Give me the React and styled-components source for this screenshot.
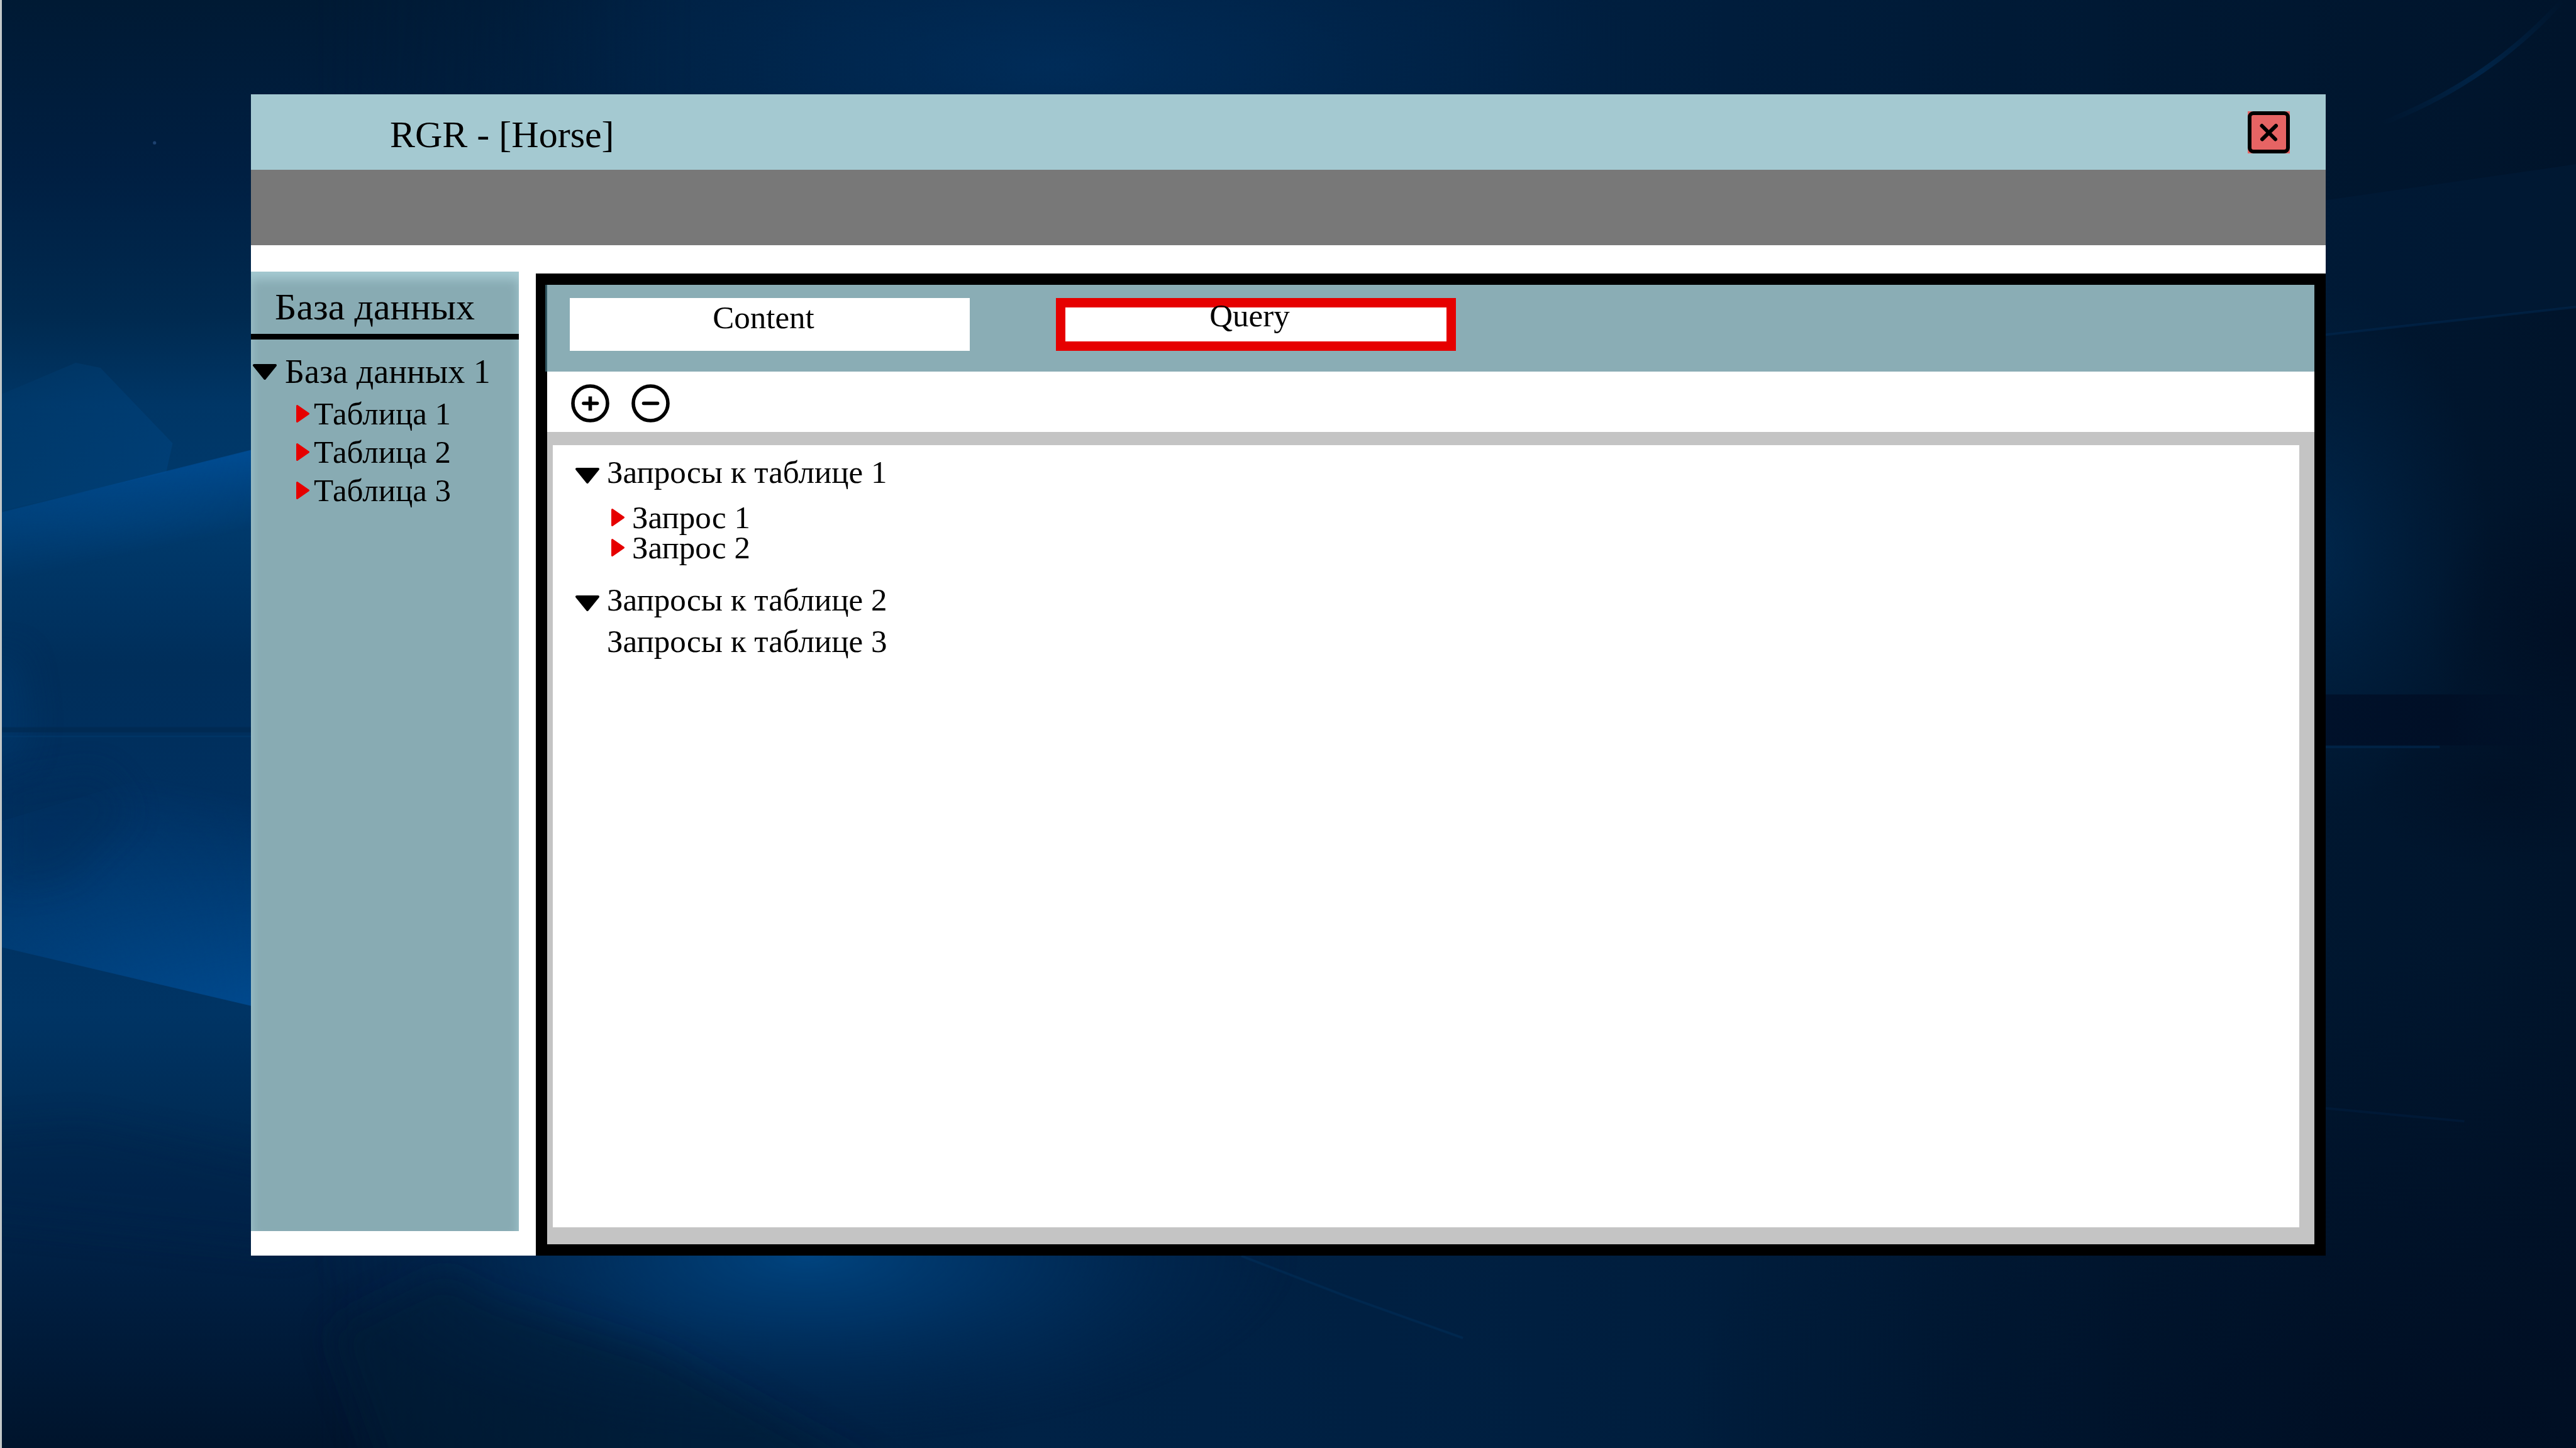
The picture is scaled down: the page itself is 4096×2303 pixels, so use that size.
import React, { useState } from "react";
import styled, { createGlobalStyle } from "styled-components";

const GlobalStyle = createGlobalStyle`
  * { box-sizing: border-box; }
  body { margin: 0; background: #001a35; }
  button { font: inherit; color: inherit; border: 0; padding: 0; background: none; cursor: pointer; }
  ul { list-style: none; margin: 0; padding: 0; }
  h1, h2 { margin: 0; font-weight: 400; }
`;

const Desktop = styled.div`
  position: relative;
  isolation: isolate;
  display: flex;
  flex-direction: column;
  min-height: 100vh;
  padding: 150px 398px 306px 396px;
  border-left: 3px solid #c3c8c9;
  font-family: "Liberation Serif", "Times New Roman", serif;
  color: #000;
`;

const Backdrop = styled.svg`
  position: absolute;
  inset: 0;
  z-index: -1;
  width: 100%;
  height: 100%;
`;

const Window = styled.main`
  flex: 1;
  display: flex;
  flex-direction: column;
  background: #fff;
`;

const TitleBar = styled.header`
  display: flex;
  align-items: center;
  justify-content: space-between;
  height: 120px;
  padding: 0 57px 0 221px;
  background: #a4c9d1;
`;

const WindowTitle = styled.h1`
  padding-top: 8px;
  font-size: 60px;
  line-height: 68px;
`;

const CloseButton = styled.button`
  width: 67px;
  height: 67px;
  background: #e66464;
  svg { display: block; width: 100%; height: 100%; }
`;

const MenuStrip = styled.div`
  height: 120px;
  background: #787878;
`;

const Body = styled.div`
  flex: 1;
  display: flex;
  gap: 27px;
  padding-top: 42px;
`;

const Sidebar = styled.nav`
  width: 426px;
  margin-bottom: 39px;
  background: #88abb3;
  box-shadow: inset 0 12px 16px #a4c9d1;
`;

const SidebarTitle = styled.h2`
  height: 108px;
  padding: 22px 0 0 38px;
  border-bottom: 9px solid #000;
  font-size: 60px;
  line-height: 68px;
`;

const Tree = styled.ul`
  padding: ${(p) => p.$pad};
`;

const Branch = styled.ul`
  padding: ${(p) => p.$pad};
`;

const TreeRow = styled.button`
  display: flex;
  align-items: center;
  gap: ${(p) => p.$gap}px;
  height: ${(p) => p.$height}px;
  font-size: ${(p) => p.$size || 51}px;
  line-height: 48px;
  white-space: nowrap;
`;

const DownMark = styled.svg`
  flex: none;
  width: 38px;
  height: 25px;
  margin-top: ${(p) => (p.$low ? 10 : 0)}px;
  visibility: ${(p) => (p.$hidden ? "hidden" : "visible")};
`;

const RightMark = styled.svg`
  flex: none;
  width: 21px;
  height: 28px;
`;

const Workspace = styled.section`
  flex: 1;
  display: flex;
  flex-direction: column;
  margin-top: 3px;
  border: 18px solid #000;
  background: #c4c4c4;
`;

const TabBar = styled.div`
  display: flex;
  gap: 137px;
  height: 138px;
  padding: 21px 36px 0;
  background: #8aadb5;
  box-shadow: -3px 0 0 #2f5560;
`;

const Tab = styled.button`
  display: flex;
  justify-content: center;
  width: 636px;
  height: 84px;
  padding: ${(p) => (p.$active ? 0 : 3)}px 20px 0 0;
  background: #fff;
  box-shadow: ${(p) => (p.$active ? "inset 0 0 0 15px #e60000" : "none")};
  font-size: 51px;
  line-height: 56px;
`;

const Toolbar = styled.div`
  display: flex;
  align-items: center;
  gap: 35px;
  height: 96px;
  padding: 4px 38px 0;
  background: #fff;
`;

const ToolButton = styled.button`
  width: 61px;
  height: 61px;
  svg { display: block; width: 100%; height: 100%; }
`;

const QueryPane = styled.div`
  flex: 1;
  margin: 21px 24px 27px 9px;
  background: #fff;
`;

function Wallpaper() {
  return (
    <Backdrop viewBox="0 0 1568 882" preserveAspectRatio="none" aria-hidden="true">
      <defs>
        <linearGradient id="base" x1="0" x2="1" y1="0" y2="0">
          <stop offset="0" stopColor="#001c38" />
          <stop offset=".4" stopColor="#002246" />
          <stop offset=".6" stopColor="#001f40" />
          <stop offset=".85" stopColor="#001832" />
          <stop offset="1" stopColor="#00142b" />
        </linearGradient>
        <linearGradient id="leftColumn" x1="0" x2="0" y1="0" y2="1">
          <stop offset="0" stopColor="#001a34" />
          <stop offset=".12" stopColor="#001f42" />
          <stop offset=".22" stopColor="#002a50" />
          <stop offset=".28" stopColor="#003666" />
          <stop offset=".36" stopColor="#003a6c" />
          <stop offset=".46" stopColor="#002e5a" />
          <stop offset=".56" stopColor="#003060" />
          <stop offset=".7" stopColor="#003464" />
          <stop offset=".79" stopColor="#002a52" />
          <stop offset=".88" stopColor="#001f42" />
          <stop offset="1" stopColor="#00142c" />
        </linearGradient>
        <linearGradient id="fadeRight" x1="0" x2="1" y1="0" y2="0">
          <stop offset="0" stopColor="#fff" />
          <stop offset=".45" stopColor="#fff" />
          <stop offset="1" stopColor="#000" />
        </linearGradient>
        <mask id="leftMask">
          <rect width="420" height="882" fill="url(#fadeRight)" />
        </mask>
        <linearGradient id="fan" gradientUnits="userSpaceOnUse" x1="0" y1="0" x2="110" y2="0">
          <stop offset="0" stopColor="#00427a" stopOpacity=".35" />
          <stop offset="1" stopColor="#00498a" stopOpacity=".7" />
        </linearGradient>
        <linearGradient id="beamUp" gradientUnits="userSpaceOnUse" x1="70" y1="292" x2="80" y2="338">
          <stop offset="0" stopColor="#00509a" />
          <stop offset="1" stopColor="#00509a" stopOpacity="0" />
        </linearGradient>
        <linearGradient id="beamLow" gradientUnits="userSpaceOnUse" x1="76" y1="600" x2="100" y2="475">
          <stop offset="0" stopColor="#004c92" />
          <stop offset="1" stopColor="#004c92" stopOpacity="0" />
        </linearGradient>
        <linearGradient id="beamIn" gradientUnits="userSpaceOnUse" x1="0" y1="0" x2="153" y2="0">
          <stop offset="0" stopColor="#777" />
          <stop offset="1" stopColor="#fff" />
        </linearGradient>
        <mask id="beamMask">
          <rect width="200" height="882" fill="url(#beamIn)" />
        </mask>
        <radialGradient id="glowBottom">
          <stop offset="0" stopColor="#00447f" />
          <stop offset=".35" stopColor="#003a70" stopOpacity=".75" />
          <stop offset="1" stopColor="#002a55" stopOpacity="0" />
        </radialGradient>
        <radialGradient id="glowTop">
          <stop offset="0" stopColor="#003060" stopOpacity=".7" />
          <stop offset="1" stopColor="#002a55" stopOpacity="0" />
        </radialGradient>
        <radialGradient id="glowRight">
          <stop offset="0" stopColor="#003260" />
          <stop offset="1" stopColor="#002a50" stopOpacity="0" />
        </radialGradient>
        <radialGradient id="shade">
          <stop offset="0" stopColor="#000c20" />
          <stop offset="1" stopColor="#000c20" stopOpacity="0" />
        </radialGradient>
        <linearGradient id="band" x1="0" x2="1" y1="0" y2="0">
          <stop offset="0" stopColor="#00112a" />
          <stop offset=".5" stopColor="#000f26" />
          <stop offset="1" stopColor="#00112a" stopOpacity="0" />
        </linearGradient>
        <linearGradient id="topRay" gradientUnits="userSpaceOnUse" x1="1450" y1="75" x2="1560" y2="0">
          <stop offset="0" stopColor="#003668" stopOpacity="0" />
          <stop offset=".5" stopColor="#003668" stopOpacity=".45" />
          <stop offset="1" stopColor="#003668" stopOpacity="0" />
        </linearGradient>
        <filter id="soft" filterUnits="userSpaceOnUse" x="-50" y="0" width="700" height="960">
          <feGaussianBlur stdDeviation="10" />
        </filter>
      </defs>
      <rect width="1568" height="882" fill="url(#base)" />
      <rect width="420" height="882" fill="url(#leftColumn)" mask="url(#leftMask)" />

      <ellipse cx="640" cy="40" rx="360" ry="110" fill="url(#glowTop)" />
      <ellipse cx="1405" cy="335" rx="110" ry="160" fill="url(#glowRight)" opacity=".6" />
      <ellipse cx="1568" cy="385" rx="90" ry="90" fill="url(#shade)" opacity=".6" />
      <ellipse cx="1520" cy="480" rx="80" ry="50" fill="url(#shade)" opacity=".45" />
      <ellipse cx="1500" cy="882" rx="480" ry="300" fill="url(#shade)" opacity=".75" />

      <polygon points="0,240 45,221 60,224 104,270 100,288 0,311" fill="url(#fan)" opacity=".55" />
      <g mask="url(#beamMask)">
        <polygon points="0,312 200,262 200,370 0,370" fill="url(#beamUp)" opacity=".85" />
        <polygon points="0,577 200,624 200,440 0,500" fill="url(#beamLow)" opacity=".9" />
      </g>
      <polygon points="-20,400 12,398 18,440 14,462 -20,470" fill="#003c74" opacity=".4" filter="url(#soft)" />
      <rect x="0" y="443" width="153" height="3" fill="#00254a" opacity=".5" />
      <path d="M0 448.500 H153" stroke="#003c70" strokeWidth="1" opacity=".5" />
      <polygon points="0,480 60,470 80,495 40,535 0,540" fill="#002a54" opacity=".4" filter="url(#soft)" />
      <polygon points="-20,690 50,685 180,712 180,760 -20,740" fill="#00244a" opacity=".4" filter="url(#soft)" />

      <ellipse cx="490" cy="765" rx="300" ry="115" fill="url(#glowBottom)" />
      <polygon points="270,775 300,792 400,824 540,900 240,920 200,810" fill="#001a36" opacity=".5" filter="url(#soft)" />
      <path d="M755 765 L820 790 L890 815" stroke="#003260" strokeWidth="1.500" fill="none" opacity=".45" />

      <polygon points="1415,204 1568,187 1568,100 1415,122" fill="#002246" opacity=".25" />
      <path d="M1415 204 L1568 187" stroke="#003262" strokeWidth="1.500" opacity=".35" />
      <path d="M1450 75 Q1515 50 1560 0" stroke="url(#topRay)" strokeWidth="3" fill="none" />
      <rect x="1415" y="423" width="153" height="31" fill="url(#band)" />
      <path d="M1415 455 H1485" stroke="#002c56" strokeWidth="1.500" opacity=".5" />
      <path d="M1415 675 L1500 683" stroke="#002248" strokeWidth="1.500" opacity=".4" />
      <circle cx="93" cy="87" r="1" fill="#1d4270" />
    </Backdrop>
  );
}

function Down({ hidden, low }) {
  return (
    <DownMark viewBox="0 0 38 25" $hidden={hidden} $low={low} aria-hidden="true">
      <path d="M2 2 H36 L19 23 Z" stroke="#000" strokeWidth="4" strokeLinejoin="round" />
    </DownMark>
  );
}

function Right() {
  return (
    <RightMark viewBox="0 0 21 28" aria-hidden="true">
      <path d="M1.500 1.500 L19.500 14 L1.500 26.500 Z" fill="#e60000" stroke="#e60000" strokeWidth="3" strokeLinejoin="round" />
    </RightMark>
  );
}

const tables = ["Таблица 1", "Таблица 2", "Таблица 3"];
const groups = [
  { name: "Запросы к таблице 1", marked: true, queries: ["Запрос 1", "Запрос 2"] },
  { name: "Запросы к таблице 2", marked: true, queries: [] },
  { name: "Запросы к таблице 3", marked: false, queries: [] },
];

export default function App() {
  const [tab, setTab] = useState("Query");

  return (
    <Desktop>
      <GlobalStyle />
      <Wallpaper />
      <Window>
        <TitleBar>
          <WindowTitle>RGR - [Horse]</WindowTitle>
          <CloseButton aria-label="Close">
            <svg viewBox="0 0 67 67" fill="none" stroke="#000" strokeWidth="6" strokeLinecap="round">
              <rect x="3" y="3" width="61" height="61" rx="6" />
              <path d="M22.500 23 L44 44.500 M45 23 L23 44.500" />
            </svg>
          </CloseButton>
        </TitleBar>
        <MenuStrip />
        <Body>
          <Sidebar>
            <SidebarTitle>База данных</SidebarTitle>
            <Tree $pad="21px 0 0 3px">
              <li>
                <TreeRow $gap={13} $height={60} $size={54}>
                  <Down />
                  База данных 1
                </TreeRow>
                <Branch $pad="6px 0 0 69px">
                  {tables.map((name) => (
                    <li key={name}>
                      <TreeRow $gap={7} $height={61}>
                        <Right />
                        {name}
                      </TreeRow>
                    </li>
                  ))}
                </Branch>
              </li>
            </Tree>
          </Sidebar>
          <Workspace>
            <TabBar role="tablist">
              {["Content", "Query"].map((name) => (
                <Tab key={name} role="tab" aria-selected={tab === name} $active={tab === name} onClick={() => setTab(name)}>
                  {name}
                </Tab>
              ))}
            </TabBar>
            <Toolbar>
              <ToolButton aria-label="Add">
                <svg viewBox="0 0 61 61" fill="none" stroke="#000" strokeWidth="5.600">
                  <circle cx="30.500" cy="30.500" r="27.500" />
                  <path d="M20 30.500 H41.500" strokeLinecap="round" />
                  <path d="M30.500 19.500 V42" />
                </svg>
              </ToolButton>
              <ToolButton aria-label="Remove">
                <svg viewBox="0 0 61 61" fill="none" stroke="#000" strokeWidth="5.600">
                  <circle cx="30.500" cy="30.500" r="27.500" />
                  <path d="M19.500 30.500 H41.500" strokeLinecap="round" />
                </svg>
              </ToolButton>
            </Toolbar>
            <QueryPane>
              <Tree $pad="10px 0 0 36px">
                {groups.map((group) => (
                  <li key={group.name}>
                    <TreeRow $gap={12} $height={66}>
                      <Down low hidden={!group.marked} />
                      {group.name}
                    </TreeRow>
                    {group.queries.length > 0 && (
                      <Branch $pad="15px 0 26px 57px">
                        {group.queries.map((name) => (
                          <li key={name}>
                            <TreeRow $gap={12} $height={48}>
                              <Right />
                              {name}
                            </TreeRow>
                          </li>
                        ))}
                      </Branch>
                    )}
                  </li>
                ))}
              </Tree>
            </QueryPane>
          </Workspace>
        </Body>
      </Window>
    </Desktop>
  );
}
